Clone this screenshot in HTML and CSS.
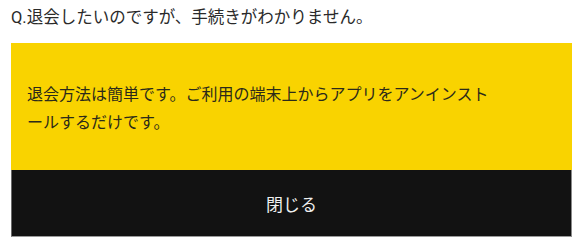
FILE: index.html
```html
<!DOCTYPE html>
<html lang="ja">
<head>
    <meta charset="UTF-8">
    <meta name="viewport" content="width=device-width, initial-scale=1.0">
    <title>FAQ</title>
    <link rel="stylesheet" href="styles.css">
</head>
<body>
    <div class="faq">
        <p class="question">Q.退会したいのですが、手続きがわかりません。</p>
        <div class="answer-box">
            <div class="answer">
                <p>退会方法は簡単です。ご利用の端末上からアプリをアンインストールするだけです。</p>
            </div>
            <button class="close-btn">閉じる</button>
        </div>
    </div>
</body>
</html>
```
FILE: styles.css
```css
body { margin: 0; font-family: Roboto, "Noto Sans CJK JP", sans-serif; background: #fff; }
.faq { padding: 6px 8px 0 11px; }
.question { margin: 0; font-size: 16.5px; line-height: 24px; color: #2a2a2a; }
.answer-box { margin-top: 13px; width: 561px; }
.answer { background: #f9d300; padding: 38px 73px 33px 16px; }
.answer p { margin: 0; font-size: 16px; line-height: 28px; color: #2b2a1a; line-break: normal; }
.close-btn {
    display: block; width: 100%; height: 67px; border: 0;
    border-left: 1px solid #6a6a6a; border-right: 1px solid #8a8a8a; border-bottom: 1px solid #9a9a9a;
    background: #121212; color: #eee; font-family: inherit; font-size: 17px;
}
```
